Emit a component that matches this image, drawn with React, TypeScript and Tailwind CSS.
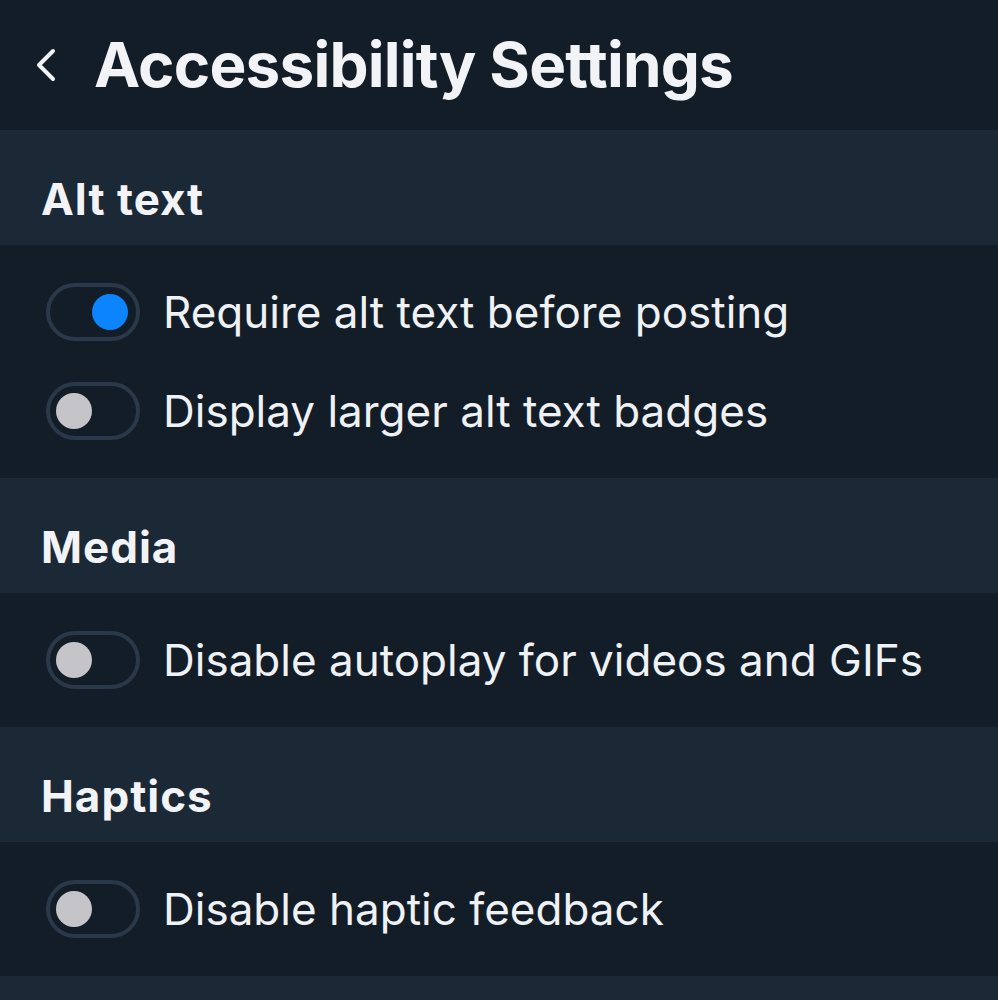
import React from "react";

function Toggle({ on }: { on: boolean }) {
  return (
    <div className="relative w-[94px] h-[58px] rounded-full border-[4px] border-[#2a3949] bg-[#131d27] shrink-0">
      <div
        className={
          on
            ? "absolute top-[7px] left-[42px] w-[36px] h-[36px] rounded-full bg-[#0b84fe]"
            : "absolute top-[7px] left-[6px] w-[36px] h-[36px] rounded-full bg-[#c4c4c9]"
        }
      />
    </div>
  );
}

function SectionHeader({ title }: { title: string }) {
  return (
    <div className="bg-[#1b2836] pl-[41px] pt-[47px] pb-[24px]">
      <div className="text-[44px] leading-[44px] font-bold tracking-[1px] text-[#f1f3f6]">{title}</div>
    </div>
  );
}

function Row({ on, label }: { on: boolean; label: string }) {
  return (
    <div className="flex items-center h-[58px] pl-[46px]">
      <Toggle on={on} />
      <div className="ml-[23px] text-[44px] leading-[44px] text-[#eef1f5] whitespace-nowrap">{label}</div>
    </div>
  );
}

export default function App() {
  return (
    <div
      className="w-[998px] h-[1000px] overflow-hidden bg-[#131d27]"
      style={{ fontFamily: "Inter, 'Noto Sans', sans-serif" }}
    >
      <div className="h-[130px] flex items-center bg-[#131d27]">
        <svg width="30" height="40" viewBox="0 0 30 40" className="ml-[30px]">
          <polyline
            points="23,6 9,20 23,34"
            fill="none"
            stroke="#f1f3f6"
            strokeWidth="4"
            strokeLinecap="round"
            strokeLinejoin="round"
          />
        </svg>
        <div className="ml-[34px] text-[62px] leading-[62px] font-bold tracking-[-0.8px] text-[#f1f3f6] whitespace-nowrap">
          Accessibility Settings
        </div>
      </div>

      <SectionHeader title="Alt text" />
      <div className="flex flex-col gap-[41px] py-[38px]">
        <Row on={true} label="Require alt text before posting" />
        <Row on={false} label="Display larger alt text badges" />
      </div>

      <SectionHeader title="Media" />
      <div className="flex flex-col gap-[41px] py-[38px]">
        <Row on={false} label="Disable autoplay for videos and GIFs" />
      </div>

      <SectionHeader title="Haptics" />
      <div className="flex flex-col gap-[41px] py-[38px]">
        <Row on={false} label="Disable haptic feedback" />
      </div>

      <div className="h-[115px] bg-[#1b2836]" />
    </div>
  );
}
